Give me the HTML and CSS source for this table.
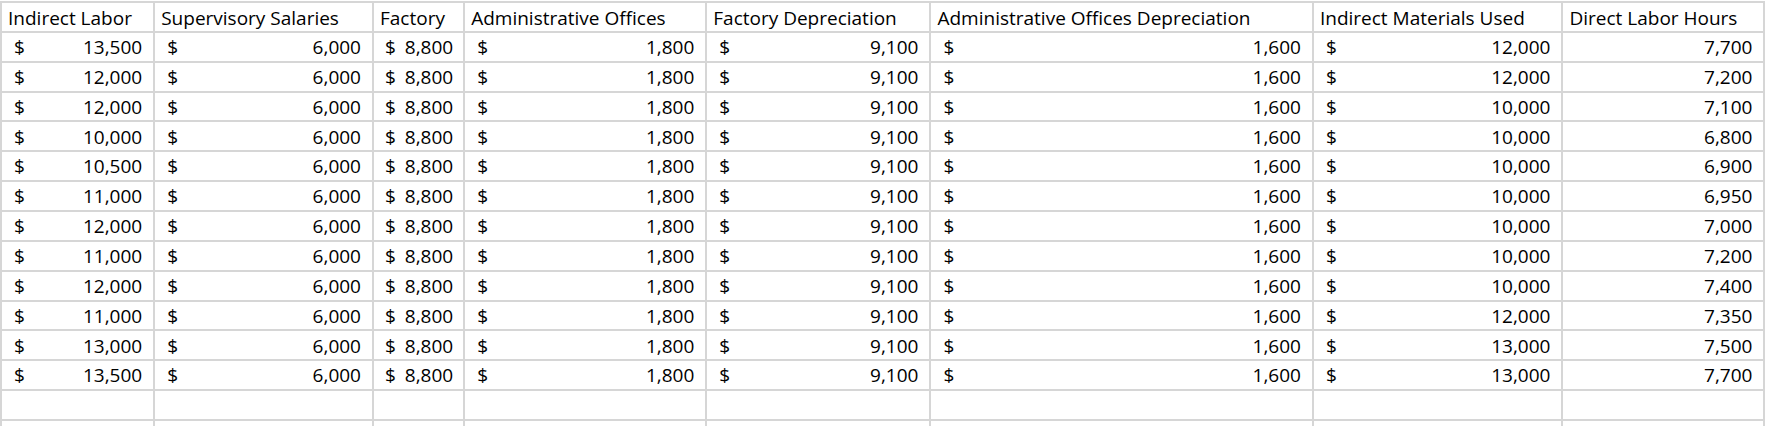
FILE: index.html
```html
<!DOCTYPE html>
<html lang="en">
<head>
<meta charset="utf-8">
<title>Overhead data</title>
<link rel="stylesheet" href="styles.css">
</head>
<body>
<div class="sheet">
  <div class="cell head">Indirect Labor</div>
  <div class="cell head">Supervisory Salaries</div>
  <div class="cell head">Factory</div>
  <div class="cell head">Administrative Offices</div>
  <div class="cell head">Factory Depreciation</div>
  <div class="cell head">Administrative Offices Depreciation</div>
  <div class="cell head">Indirect Materials Used</div>
  <div class="cell head">Direct Labor Hours</div>
</div>
<script src="app.js"></script>
</body>
</html>
```

FILE: app.js
```js
const rows = [
  ["13,500","12,000","7,700"],
  ["12,000","12,000","7,200"],
  ["12,000","10,000","7,100"],
  ["10,000","10,000","6,800"],
  ["10,500","10,000","6,900"],
  ["11,000","10,000","6,950"],
  ["12,000","10,000","7,000"],
  ["11,000","10,000","7,200"],
  ["12,000","10,000","7,400"],
  ["11,000","12,000","7,350"],
  ["13,000","13,000","7,500"],
  ["13,500","13,000","7,700"]
];
const sheet = document.querySelector('.sheet');
function money(v, cls) {
  const d = document.createElement('div');
  d.className = 'cell acct' + (cls ? ' ' + cls : '');
  const s = document.createElement('span');
  s.className = 'cur';
  s.textContent = '$';
  const n = document.createElement('span');
  n.className = 'amt';
  n.textContent = v;
  d.append(s, n);
  sheet.appendChild(d);
}
function plain(v) {
  const d = document.createElement('div');
  d.className = 'cell num';
  d.textContent = v;
  sheet.appendChild(d);
}
rows.forEach(r => {
  money(r[0]);
  money('6,000');
  money('8,800', 'tight');
  money('1,800');
  money('9,100');
  money('1,600');
  money(r[1]);
  plain(r[2]);
});
for (let i = 0; i < 16; i++) {
  const d = document.createElement('div');
  d.className = 'cell';
  sheet.appendChild(d);
}
```

FILE: styles.css
```css
html, body {
  margin: 0;
  padding: 0;
  background: #ffffff;
  overflow: hidden;
  height: 100%;
}
body {
  box-sizing: border-box;
  padding-top: 1px;
  font-family: "Open Sans", Lato, sans-serif;
  font-size: 19px;
  color: #000000;
}
.sheet {
  display: grid;
  grid-template-columns: 153.2px 218.8px 91.2px 242.1px 224.2px 382.5px 249.5px 202px;
  grid-auto-rows: 29.87px;
  border-top: 2px solid #d6d6d6;
  border-left: 2px solid #d6d6d6;
  width: max-content;
  height: 100%;
  box-sizing: border-box;
  overflow: hidden;
}
.cell {
  box-sizing: border-box;
  border-right: 2px solid #d6d6d6;
  border-bottom: 2px solid #d6d6d6;
  display: flex;
  align-items: flex-end;
  padding: 0 0 2px 0;
  white-space: nowrap;
  overflow: hidden;
  line-height: 1.2;
}
.head {
  padding-left: 6px;
  padding-bottom: 1.5px;
}
.acct {
  justify-content: space-between;
  padding-left: 12px;
  padding-right: 11px;
}
.acct.tight {
  padding-left: 11px;
  padding-right: 10px;
}
.num {
  justify-content: flex-end;
  padding-right: 11px;
}
```
